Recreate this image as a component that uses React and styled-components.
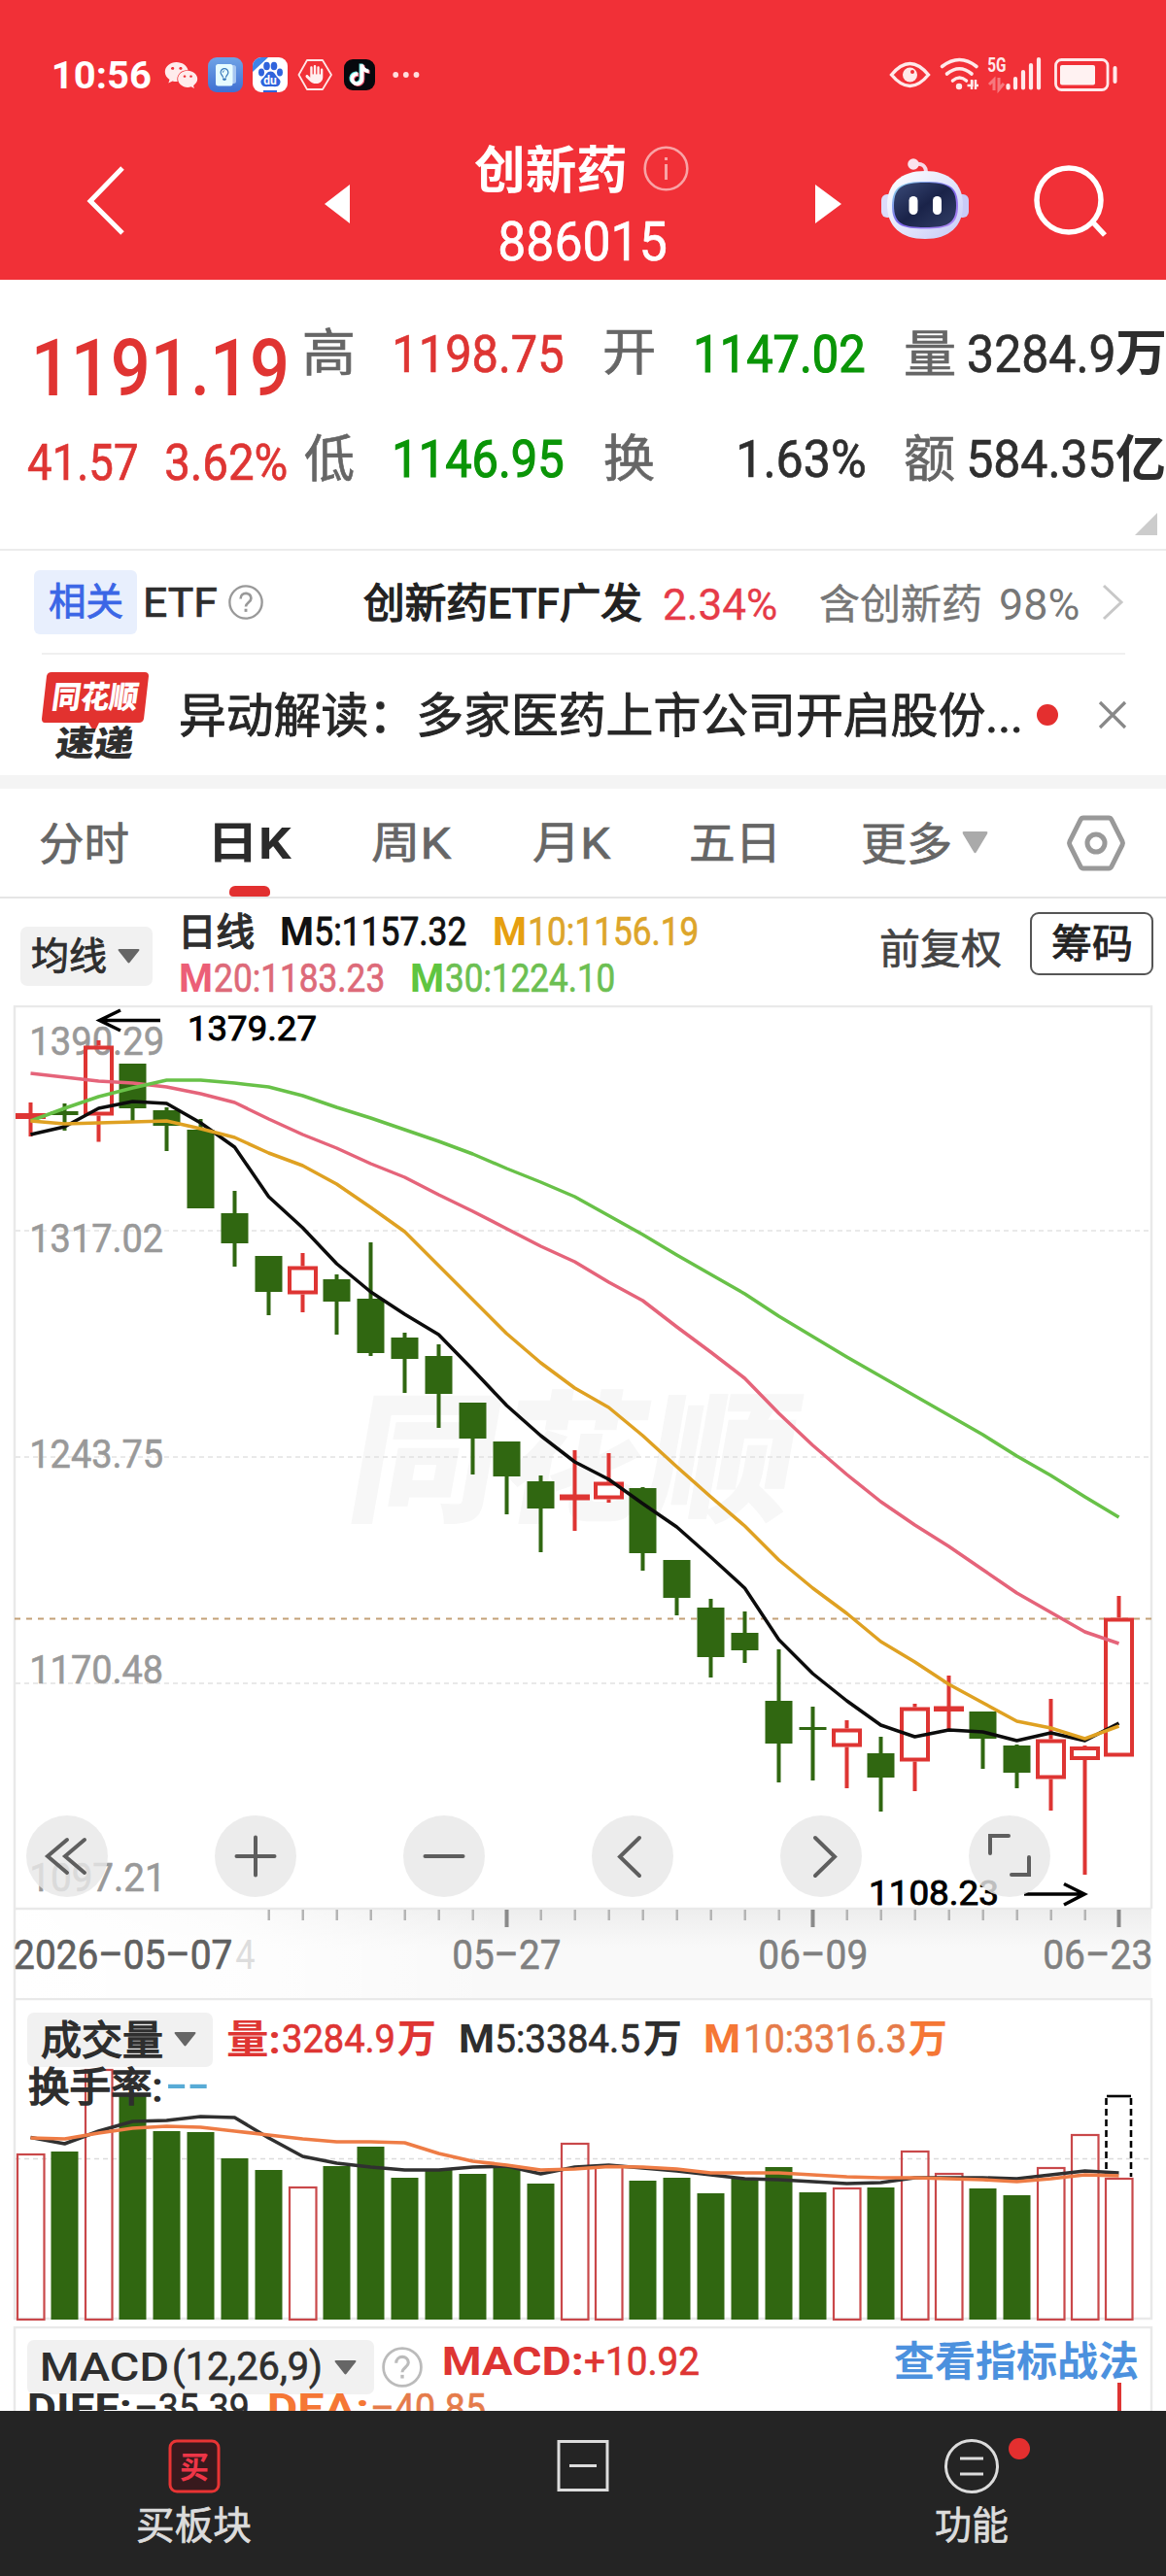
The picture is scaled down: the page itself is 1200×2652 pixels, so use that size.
import React from 'react';
import styled, { createGlobalStyle } from 'styled-components';
import { FaWeixin, FaTiktok, FaHand, FaRegLightbulb } from 'react-icons/fa6';

const FAMILY = 'Roboto, "Noto Sans CJK SC", sans-serif';
const RED = '#de3533';
const GREEN = '#306711';

const GlobalStyle = createGlobalStyle`
  * { box-sizing: border-box; }
  html, body { margin: 0; padding: 0; background: #fff; }
  body { font-family: ${FAMILY}; color: #2e2e2e; }
  svg { display: block; flex: none; overflow: visible; }
`;

/* ---------- text fitted to a given ink width ---------- */

const ctx = document.createElement('canvas').getContext('2d');

function measure(text, size, weight) {
  ctx.font = `${weight} ${size}px ${FAMILY}`;
  const m = ctx.measureText(text);
  return {
    left: m.actualBoundingBoxLeft,
    width: m.actualBoundingBoxLeft + m.actualBoundingBoxRight,
    middle: (m.actualBoundingBoxAscent - m.actualBoundingBoxDescent) / 2,
  };
}

const FitBox = styled.span`
  display: block;
  flex: none;
  height: ${(p) => p.$size}px;
  width: ${(p) => p.$w}px;
  margin-left: ${(p) => p.$ml}px;
  font-size: ${(p) => p.$size}px;
  line-height: ${(p) => p.$size}px;
  font-weight: ${(p) => p.$weight};
  color: ${(p) => p.$color || 'inherit'};
  -webkit-text-stroke: ${(p) => p.$stroke}px currentColor;
`;
const FitInk = styled.span`
  display: inline-block;
  white-space: nowrap;
  transform-origin: 0 50%;
`;

// `stroke` thickens the regular weight into a medium one
function Fit({ children, w, size, ml = 0, weight = 400, stroke = 0.7, color, dy = 0 }) {
  const m = measure(children, size, weight);
  const shift = dy - (0.342 * size - m.middle);
  return (
    <FitBox $w={w} $size={size} $ml={ml} $weight={weight} $stroke={weight === 400 ? stroke : 0} $color={color}>
      <FitInk style={{ transform: `translateY(${shift}px) scaleX(${w / m.width}) translateX(${m.left}px)` }}>
        {children}
      </FitInk>
    </FitBox>
  );
}

const ChartText = styled.text`
  font-family: ${FAMILY};
  font-size: ${(p) => p.$size}px;
  font-weight: ${(p) => p.$weight};
`;

function Label({ x, y, w, size = 41, weight = 400, fill, stroke = 0, children }) {
  const m = measure(children, size, weight);
  return (
    <g transform={`translate(${x} ${y}) scale(${w / m.width} 1)`}>
      <ChartText $size={size} $weight={weight} x={m.left} y="0" fill={fill} stroke={stroke ? fill : 'none'} strokeWidth={stroke}>{children}</ChartText>
    </g>
  );
}

/* ---------- layout ---------- */

const Page = styled.main`
  width: 1200px;
  height: 2652px;
  display: flex;
  flex-direction: column;
  overflow: hidden;
  background: #fff;
`;
const Header = styled.header`
  height: 288px;
  flex: none;
  background: #f13037;
  color: #fff;
  padding-top: 47px;
`;
const StatusBar = styled.div`
  height: 60px;
  display: flex;
  align-items: center;
  padding: 0 50px 0 56px;
`;
const StatusIcon = styled.span`
  display: flex;
  align-items: center;
  justify-content: center;
  width: ${(p) => p.$w}px;
  height: ${(p) => p.$h || p.$w}px;
  margin-left: ${(p) => p.$ml}px;
  border-radius: 9px;
  background: ${(p) => p.$bg || 'transparent'};
  overflow: hidden;
`;
const Spacer = styled.span`flex: 1;`;
const TitleBar = styled.div`
  height: 181px;
  display: flex;
  align-items: center;
  padding-left: 89px;
`;
const TitleBlock = styled.div`
  width: 479px;
  height: 181px;
  display: flex;
  flex-direction: column;
  padding: 41px 0 0 128px;
`;
const TitleLine = styled.div`
  display: flex;
  flex: none;
  align-items: center;
  height: 51px;
`;
const CodeLine = styled.div`
  display: flex;
  flex: none;
  align-items: center;
  height: 89px;
  padding: 10px 0 0 27px;
`;
const Quote = styled.section`
  height: 279px;
  flex: none;
  padding-top: 22px;
  border-bottom: 2px solid #ececec;
`;
const QuoteRow = styled.div`
  height: 108px;
  display: flex;
  align-items: center;
`;
const Corner = styled.div`
  display: flex;
  justify-content: flex-end;
  padding: 2px 9px 0 0;
`;
const Related = styled.section`
  height: 105px;
  flex: none;
  display: flex;
  align-items: center;
  padding-left: 35px;
`;
const Badge = styled.span`
  width: 106px;
  height: 66px;
  display: flex;
  align-items: center;
  justify-content: center;
  border-radius: 6px;
  background: #e8effd;
`;
const IconSlot = styled.span`
  margin-left: ${(p) => p.$ml}px;
  margin-top: ${(p) => p.$mt || 0}px;
`;
const News = styled.section`
  height: 126px;
  flex: none;
  display: flex;
  align-items: center;
  margin-left: 43px;
  width: 1115px;
  border-top: 2px solid #f0f0f0;
`;
const NewsLogo = styled.div`
  width: 110px;
  height: 92px;
`;
const Dot = styled.span`
  width: 22px;
  height: 22px;
  flex: none;
  border-radius: 50%;
  background: #e42f2f;
  margin-left: ${(p) => p.$ml}px;
`;
const Band = styled.div`
  height: 14px;
  flex: none;
  background: #f4f4f4;
`;
const Tabs = styled.nav`
  height: 113px;
  flex: none;
  display: flex;
  align-items: center;
  border-bottom: 2px solid #e5e5e5;
`;
const Tab = styled.div`
  height: 111px;
  display: flex;
  flex-direction: column;
  align-items: center;
  padding-top: 33px;
  margin-left: ${(p) => p.$ml}px;
  color: ${(p) => (p.$active ? '#2b2b2b' : '#666')};
`;
const TabMark = styled.span`
  width: 42px;
  height: 11px;
  margin-top: 22px;
  margin-left: -6px;
  border-radius: 6px 6px 4px 4px;
  background: #e23030;
`;
const Legend = styled.section`
  height: 110px;
  flex: none;
  display: flex;
  align-items: flex-start;
  padding-left: 21px;
`;
const Chip = styled.div`
  width: ${(p) => p.$w}px;
  height: ${(p) => p.$h}px;
  margin-top: ${(p) => p.$mt || 0}px;
  flex: none;
  display: flex;
  align-items: center;
  border-radius: 7px;
  background: #f1f1f1;
`;
const LegendLines = styled.div`
  width: 750px;
  padding: 10px 0 0 29px;
`;
const LegendLine = styled.div`
  height: 48px;
  display: flex;
  align-items: center;
`;
const Adjust = styled.div`
  height: 103px;
  display: flex;
  align-items: center;
`;
const ChipButton = styled.button`
  width: 127px;
  height: 65px;
  margin: 14px 0 0 30px;
  padding: 0 0 0 21px;
  display: flex;
  align-items: center;
  border: 2px solid #555;
  border-radius: 9px;
  background: #fff;
  font-family: inherit;
`;
const ChartPanel = styled.section`
  position: relative;
  height: ${(p) => p.$h}px;
  flex: none;
  overflow: hidden;
`;
const Overlay = styled.div`
  position: absolute;
  left: 0;
  top: 0;
  width: 1200px;
`;
const Controls = styled.div`
  position: absolute;
  left: 27px;
  top: 834px;
  display: flex;
  gap: 110px;
`;
const RoundButton = styled.button`
  width: 84px;
  height: 84px;
  padding: 0;
  border: 0;
  border-radius: 50%;
  background: rgba(232, 232, 232, 0.82);
`;
const PanelHead = styled.div`
  display: flex;
  align-items: center;
  height: ${(p) => p.$h}px;
  padding-left: 28px;
`;
const SubLine = styled.div`
  display: flex;
  align-items: center;
  height: 40px;
  padding-left: 30px;
`;
const NavBar = styled.footer`
  height: 170px;
  flex: none;
  display: grid;
  grid-template-columns: repeat(3, 400px);
  background: #242424;
  color: #dcdcdc;
`;
const NavItem = styled.div`
  display: flex;
  flex-direction: column;
  align-items: center;
  padding-top: 28px;
  position: relative;
`;
const NavText = styled.div`
  display: flex;
  margin-top: 12px;
`;
const NavDot = styled(Dot)`
  position: absolute;
  left: 238px;
  top: 28px;
`;

/* ---------- icons ---------- */

const Caret = ({ color = '#666', w = 23, h = 15 }) => (
  <svg width={w} height={h} viewBox="0 0 23 15" preserveAspectRatio="none"><path d="M1.5 0h20q1.500 0 .8 1.500L12.600 13.800q-1.100 1.400-2.200 0L.7 1.500Q0 0 1.500 0z" fill={color} /></svg>
);
const Help = ({ size, color }) => (
  <svg width={size} height={size} viewBox="0 0 40 40" fill="none" stroke={color} strokeWidth="2.600">
    <circle cx="20" cy="20" r="18.500" />
    <path d="M14 16c0-8 12-8 12-.5 0 4.500-6 5-6 9.500" strokeWidth="3" /><path d="M20 27.500v3.500" strokeWidth="3.200" />
  </svg>
);
const BaiduIcon = () => (
  <svg width="36" height="36" viewBox="0 0 36 36">
    <rect width="36" height="36" fill="#fff" />
    <path d="M0 0h16L0 15z" fill="#3f83e8" />
    <g fill="#2f63dc">
      <ellipse cx="14.500" cy="9" rx="3.300" ry="4.300" /><ellipse cx="22" cy="9" rx="3.300" ry="4.300" />
      <ellipse cx="9" cy="15.500" rx="3" ry="4" /><ellipse cx="28" cy="15.500" rx="3" ry="4" />
      <path d="M18.500 14.500c4 0 4.500 3.500 7 6s4 3.500 2.500 7-5 2.500-9.500 2.500-8 1-9.500-2.500 0-4.500 2.500-7 3-6 7-6z" />
      <path d="M11 34h14v2H11z" />
    </g>
    <text x="18" y="27.500" textAnchor="middle" fill="#fff" fontFamily="Roboto" fontWeight="700" fontSize="12">du</text>
  </svg>
);
const RobotIcon = () => (
  <svg width="90" height="84" viewBox="0 0 90 84">
    <defs>
      <linearGradient id="shell" x1="0" y1="0" x2="1" y2="1"><stop offset="0" stopColor="#ffffff" /><stop offset=".6" stopColor="#dfe2fb" /><stop offset="1" stopColor="#c4c8f6" /></linearGradient>
      <linearGradient id="rim" x1="0" y1="0" x2="1" y2="1"><stop offset="0" stopColor="#8fe4ee" /><stop offset=".5" stopColor="#7a63e8" /><stop offset="1" stopColor="#b58cf5" /></linearGradient>
      <linearGradient id="face" x1="0" y1="0" x2="1" y2="1"><stop offset="0" stopColor="#3a4a78" /><stop offset=".5" stopColor="#1a2349" /><stop offset="1" stopColor="#323f66" /></linearGradient>
    </defs>
    <path d="M34 6q12-2 12 9" fill="none" stroke="#f7d8e6" strokeWidth="4" />
    <circle cx="33" cy="6" r="5.800" fill="#fbe3ee" />
    <rect x="0" y="37" width="13" height="24" rx="6" fill="#dcdcfa" /><rect x="77" y="37" width="13" height="24" rx="6" fill="#c9cbf7" />
    <path d="M45 13c25 0 39 13 39 35S70 83 45 83 6 70 6 48s14-35 39-35z" fill="url(#shell)" />
    <path d="M45 24c24 0 34 5 34 25S69 72.500 45 72.500 11 69 11 49s10-25 34-25z" fill="url(#rim)" />
    <path d="M45 25c22 0 32 4 32 23.500S67 71 45 71 13 68 13 48.500s10-23.500 32-23.500z" fill="url(#face)" />
    <rect x="28.500" y="39" width="9" height="19" rx="4.500" fill="#fff" /><rect x="53" y="39" width="9" height="19" rx="4.500" fill="#fff" />
  </svg>
);
const StatusRight = () => (
  <svg width="236" height="40" viewBox="914 57 236 40" fill="none" stroke="#ffe9ea">
    <path d="M917.500 77Q927 65.500 936.500 65.500T955.500 77Q946 88.500 936.500 88.500T917.500 77z" strokeWidth="3.400" />
    <circle cx="936.500" cy="77" r="7.500" fill="#ffe9ea" stroke="none" /><circle cx="939" cy="74" r="2" fill="#f13037" stroke="none" />
    <g strokeWidth="3.600" strokeLinecap="round">
      <path d="M969.500 68.500q18-14 35.500 0" /><path d="M974.500 76q13-10.500 25.500 0" /><path d="M980.500 83q7-6 14 0" />
    </g>
    <circle cx="987" cy="89" r="3.200" fill="#ffe9ea" stroke="none" />
    <path d="M995.500 88h5V82.500M1000 82v10M1004 82v10v-4h3" strokeWidth="2.400" />
    <g opacity=".4"><path d="M1018 87l5-5v11M1028 80v12l5-6" strokeWidth="3" /></g>
    <g strokeWidth="4.200" strokeLinecap="round">
      <path d="M1037.500 88v2.500M1045 81v9.500M1053 74v16.500M1061 67v23.500M1069 61v29.500" />
    </g>
    <rect x="1086.500" y="61.500" width="53.500" height="31" rx="6" strokeWidth="2.800" />
    <rect x="1091" y="67" width="36" height="20.500" rx="2" fill="#fff2f2" stroke="none" />
    <path d="M1147.500 70v14" strokeWidth="4" strokeLinecap="round" />
    <Label x={1017} y={74} w={18} size={20} weight={700} fill="#ffe9ea">5G</Label>
  </svg>
);

/* ---------- data ---------- */

// kind, high, body top, body bottom, low
const CANDLES = [
  ['r', 1135, 1146, 1152, 1170], ['g', 1136, 1144, 1148, 1164], ['r', 1071, 1076.5, 1148.5, 1175.5],
  ['g', 1095, 1095, 1141, 1155], ['g', 1140, 1143, 1159, 1185], ['g', 1152, 1163, 1244, 1244],
  ['g', 1226, 1249, 1280, 1304], ['g', 1293, 1293, 1330, 1354], ['r', 1290, 1303.5, 1332.5, 1351],
  ['g', 1312, 1317, 1340, 1374], ['g', 1279, 1337, 1393, 1396], ['g', 1372, 1377, 1399, 1434],
  ['g', 1384, 1396, 1435, 1470], ['g', 1444, 1444, 1481, 1518], ['g', 1484, 1484, 1520, 1559],
  ['g', 1519, 1525, 1553, 1598], ['r', 1493, 1538.5, 1544.5, 1576], ['r', 1496, 1525.5, 1543.5, 1547],
  ['g', 1531, 1532, 1599, 1617], ['g', 1606, 1606, 1645, 1663], ['g', 1646, 1655, 1706, 1727],
  ['g', 1659, 1681, 1699, 1712], ['g', 1698, 1751, 1795, 1835], ['g', 1757, 1778, 1781, 1833],
  ['r', 1771, 1779.5, 1798.5, 1841], ['g', 1788, 1805, 1830, 1865], ['r', 1754, 1757.5, 1813.5, 1844],
  ['r', 1725, 1756.5, 1762, 1782], ['g', 1762, 1762, 1790, 1821], ['g', 1796, 1797, 1825, 1841],
  ['r', 1749, 1790.5, 1831.5, 1864], ['r', 1797, 1798, 1812, 1930], ['r', 1643, 1665.5, 1808.5, 1808],
];
const AVERAGES = [
  ['#e5647a', [1105, 1109, 1113, 1115, 1119, 1126, 1135, 1152, 1168, 1182, 1198, 1212, 1230, 1247, 1265, 1283, 1299, 1320, 1339, 1366, 1392, 1419, 1455, 1488, 1518, 1546, 1570, 1592, 1616, 1640, 1660, 1680, 1692]],
  ['#68c148', [1154, 1141, 1129, 1120, 1112, 1112, 1115, 1119, 1128, 1140, 1151, 1163, 1175, 1188, 1203, 1217, 1232, 1251.5, 1271, 1292, 1312, 1332, 1355, 1376, 1397, 1417, 1437, 1457, 1477, 1499, 1519, 1541, 1562]],
  ['#0c0c0c', [1168, 1160, 1141, 1134, 1136, 1156, 1181, 1232, 1264, 1301, 1330, 1353, 1374, 1410, 1447, 1478, 1505, 1523, 1548, 1572, 1603, 1635, 1688, 1723, 1751, 1776, 1788, 1781, 1783, 1792, 1784, 1792, 1774]],
  ['#dfa122', [1154, 1157, 1156, 1155, 1154, 1162, 1171, 1187, 1200, 1219, 1243, 1268, 1303, 1338, 1373, 1403, 1429, 1449, 1478, 1510, 1541, 1571, 1606, 1635, 1661, 1690, 1711, 1734, 1753, 1772, 1779, 1790, 1777]],
];
const VOLUMES = [2217, 2215, 2130, 2156, 2194, 2195, 2222, 2234, 2251, 2230, 2210, 2242, 2233, 2238, 2231, 2248, 2206, 2229, 2245, 2242, 2258, 2242, 2231, 2257, 2252, 2252, 2214, 2237, 2253, 2260, 2231, 2197, 2242];
const VOLUME_LINES = [
  ['#303030', [2200.5, 2207, 2194, 2184, 2183, 2179, 2180, 2201, 2220, 2227, 2231, 2234, 2234, 2231, 2230, 2238, 2231, 2229, 2232, 2235, 2239, 2243, 2244, 2246, 2248, 2247, 2242, 2242, 2242, 2243, 2239, 2235, 2237]],
  ['#ee7c45', [2201, 2202, 2196, 2191, 2189, 2190, 2194, 2198, 2202, 2205, 2205, 2206, 2217, 2225, 2229, 2234, 2233, 2230.5, 2231, 2233, 2237, 2237, 2237, 2239, 2241, 2242, 2242, 2243, 2244, 2246, 2243, 2239, 2240]],
];
const PRICES = [['1390.29', 1086], ['1317.02', 1289], ['1243.75', 1511], ['1170.48', 1733], ['1097.21', 1947]];
const xOf = (i) => 31.5 + 35 * i;
const pointsOf = (ys) => ys.map((y, i) => `${xOf(i)},${y}`).join(' ');

function Candle({ i, d: [kind, high, top, bottom, low] }) {
  const x = xOf(i);
  if (kind === 'g') {
    return (
      <g fill={GREEN}>
        <rect x={x - 2} y={high} width="4" height={low - high} />
        <rect x={x - 14} y={top} width="28" height={bottom - top} />
      </g>
    );
  }
  const flat = bottom - top < 8;
  return (
    <g fill={RED}>
      <rect x={x - 2} y={high} width="4" height={flat ? low - high : Math.max(0, top - high)} />
      {!flat && low > bottom && <rect x={x - 2} y={bottom} width="4" height={low - bottom} />}
      {flat
        ? <rect x={x - 15.5} y={top} width="31" height={bottom - top} />
        : <rect x={x - 13.5} y={top + 2} width="27" height={bottom - top - 4} fill="none" stroke={RED} strokeWidth="4" />}
    </g>
  );
}

function PriceChart() {
  return (
    <svg width="1200" height="1022" viewBox="0 1035 1200 1022" fill="none">
      <defs>
        <linearGradient id="axisTop" x1="0" x2="0" y1="0" y2="1"><stop offset="0" stopColor="#ededed" /><stop offset="1" stopColor="#ededed" stopOpacity="0" /></linearGradient>
        <linearGradient id="axisFade" x1="0" x2="1" y1="0" y2="0"><stop offset="0" stopColor="#fff" /><stop offset=".45" stopColor="#fff" stopOpacity=".8" /><stop offset="1" stopColor="#fff" stopOpacity="0" /></linearGradient>
      </defs>
      <rect x="15" y="1965" width="1170" height="92" fill="#f9f9f9" />
      <rect x="15" y="1965" width="1170" height="40" fill="url(#axisTop)" />
      <rect x="15" y="1965" width="500" height="92" fill="url(#axisFade)" />
      <g transform="translate(363 1555) skewX(-10)">
        <Label x={0} y={0} w={444} size={146} weight={900} fill="#f7f7f7">同花顺</Label>
      </g>
      <path d="M15 2057V1036H1185V1965M15 1965H1185" stroke="#e9e9e9" strokeWidth="2.500" />
      <g stroke="#e2e2e2" strokeWidth="1.500" strokeDasharray="5 4"><path d="M16 1267H1185M16 1500H1185M16 1733H1185" /></g>
      <path d="M15 1666.500H1185" stroke="#c3a077" strokeWidth="2" strokeDasharray="6 6" />
      {PRICES.map(([t, y]) => <Label key={t} x={33} y={y} w={t === '1097.21' ? 130 : 134} stroke={0.6} size={41.5} fill="#999">{t}</Label>)}
      {CANDLES.map((d, i) => <Candle key={i} i={i} d={d} />)}
      {AVERAGES.map(([c, ys]) => <polyline key={c} points={pointsOf(ys)} stroke={c} strokeWidth="3.500" strokeLinejoin="round" />)}
      <Label x={195} y={1071} w={130} size={35.5} stroke={0.9} fill="#000">1379.27</Label>
      <Label x={896} y={1961} w={130} size={35.5} stroke={0.9} fill="#000">1108.23</Label>
      <path d="M165 1050.500H103M124 1040L102.500 1050.500L124 1061" stroke="#000" strokeWidth="3.600" />
      <path d="M1054 1950H1115M1095 1939.500L1116 1950L1095 1961" stroke="#000" strokeWidth="3.600" />
      {CANDLES.map((_, i) => i > 6 && (
        (i - 14) % 9 === 0
          ? <rect key={i} x={xOf(i) - 2} y="1966" width="4" height="18" fill="#8a8a8a" />
          : <rect key={i} x={xOf(i) - 1} y="1966" width="2.500" height="11" fill="#b5b5b5" />
      ))}
      <Label x={243} y={2027} w={19} size={42} fill="#ddd">4</Label>
      <Label x={15} y={2027} w={223} size={42} stroke={0.7} fill="#606060">2026–05–07</Label>
      <Label x={467} y={2027} w={109} size={42} stroke={0.5} fill="#808080">05–27</Label>
      <Label x={782} y={2027} w={109} size={42} stroke={0.5} fill="#808080">06–09</Label>
      <Label x={1075} y={2027} w={109} size={42} stroke={0.5} fill="#808080">06–23</Label>
    </svg>
  );
}

function VolumeChart() {
  return (
    <svg width="1200" height="338" viewBox="0 2057 1200 338" fill="none">
      <path d="M15 2387V2058H1185V2387z" stroke="#e9e9e9" strokeWidth="2.500" />
      <path d="M16 2222.500H1185" stroke="#dcdcdc" strokeWidth="1.500" strokeDasharray="5 4" />
      {VOLUMES.map((y, i) => {
        const hollow = CANDLES[i][0] === 'r';
        return hollow
          ? <rect key={i} x={xOf(i) - 13.5} y={y + 1} width="27.500" height={2387 - y} stroke="#c9484a" strokeWidth="2.200" />
          : <rect key={i} x={xOf(i) - 14} y={y} width="28" height={2388 - y} fill={GREEN} />;
      })}
      <path d="M1139 2158H1164" stroke="#000" strokeWidth="2.600" />
      <path d="M1138.500 2160V2241M1164 2160V2241" stroke="#000" strokeWidth="2.600" strokeDasharray="7 4" />
      {VOLUME_LINES.map(([c, ys]) => <polyline key={c} points={pointsOf(ys)} stroke={c} strokeWidth="3.600" strokeLinejoin="round" />)}
    </svg>
  );
}

const CONTROL_PATHS = [
  'M42 25L22 42L42 59M60 25L40 42L60 59',
  'M42 22.500V61.500M22.500 42H61.500',
  'M22.500 42H61.500',
  'M49 23L29 42.500L49 62',
  'M36 23L56 42.500L36 62',
  'M22 39V21H41M62 43V61H44',
];

export default function App() {
  return (
    <Page lang="zh-CN">
      <GlobalStyle />
      <Header>
        <StatusBar>
          <Fit w={99} size={38} weight={700}>10:56</Fit>
          <StatusIcon $w={35} $ml={14}><FaWeixin size={35} color="#ffecec" /></StatusIcon>
          <StatusIcon $w={36} $ml={10} $bg="linear-gradient(#6fa3e6, #3f6fd2)">
            <svg width="36" height="36" viewBox="0 0 36 36"><rect x="13" y="8" width="16" height="19" rx="2.500" fill="#a7c6f1" /><rect x="8" y="7" width="17.500" height="22.500" rx="2.500" fill="#e6fbff" /><FaRegLightbulb x="10.500" y="11" size={13} color="#3878bb" /></svg>
          </StatusIcon>
          <StatusIcon $w={36} $ml={10}><BaiduIcon /></StatusIcon>
          <StatusIcon $w={36} $ml={10}>
            <svg width="36" height="36" viewBox="0 0 36 36"><path d="M10 3h16l9 15-9 15H10L1.500 18z" fill="none" stroke="#ffe6e7" strokeWidth="1.800" strokeLinejoin="round" /><FaHand x="8.500" y="8" size={19} color="#ffeff0" /></svg>
          </StatusIcon>
          <StatusIcon $w={32} $ml={12} $bg="#07080d">
            <svg width="32" height="32" viewBox="0 0 32 32"><FaTiktok x="4" y="4.500" size={22} color="#5fe6e4" /><FaTiktok x="6" y="6" size={22} color="#f0566f" /><FaTiktok x="5" y="5.200" size={22} color="#fff" /></svg>
          </StatusIcon>
          <StatusIcon $w={28} $ml={18}>
            <svg width="28" height="8" viewBox="0 0 28 8" fill="#ffdede"><circle cx="3.200" cy="4" r="2.900" /><circle cx="13.800" cy="4" r="2.900" /><circle cx="24.500" cy="4" r="2.900" /></svg>
          </StatusIcon>
          <Spacer />
          <StatusRight />
        </StatusBar>
        <TitleBar>
          <IconSlot $ml={0} $mt={17}><svg width="40" height="72" viewBox="0 0 40 72"><path d="M37 3L4 37L37 70" fill="none" stroke="#fff" strokeWidth="5" /></svg></IconSlot>
          <IconSlot $ml={205} $mt={24}><svg width="26" height="40" viewBox="0 0 26 40"><path d="M26 0V40L0 20z" fill="#fff" /></svg></IconSlot>
          <TitleBlock>
            <TitleLine>
              <Fit w={156} size={52} weight={700}>创新药</Fit>
              <IconSlot $ml={18}>
                <svg width="47" height="47" viewBox="0 0 47 47" fill="none" stroke="#f9a3a5" strokeWidth="2.600"><circle cx="23.500" cy="23.500" r="21.800" /><path d="M23.500 19V35M23.500 12V15" strokeWidth="3" /></svg>
              </IconSlot>
            </TitleLine>
            <CodeLine><Fit w={170} size={55}>886015</Fit></CodeLine>
          </TitleBlock>
          <IconSlot $ml={0} $mt={24}><svg width="27" height="40" viewBox="0 0 27 40"><path d="M0 0V40L27 20z" fill="#fff" /></svg></IconSlot>
          <IconSlot $ml={41} $mt={14}><RobotIcon /></IconSlot>
          <IconSlot $ml={67} $mt={21}>
            <svg width="76" height="76" viewBox="0 0 76 76" fill="none" stroke="#fff" strokeWidth="5.500"><circle cx="36" cy="36" r="33" /><path d="M60 58L73 72" /></svg>
          </IconSlot>
        </TitleBar>
      </Header>

      <Quote>
        <QuoteRow>
          <Fit ml={37} w={257} size={82} weight={500} color="#e03432" dy={14}>1191.19</Fit>
          <Fit ml={20} w={49} size={52} color="#666" dy={-1}>高</Fit>
          <Fit ml={44} w={172} size={53} color={RED}>1198.75</Fit>
          <Fit ml={43} w={51} size={52} color="#666">开</Fit>
          <Fit ml={44} w={172} size={53} color="#0a9507" stroke={1.2}>1147.02</Fit>
          <Fit ml={43} w={50} size={52} color="#666">量</Fit>
          <Fit ml={15} w={149} size={53}>3284.9</Fit>
          <Fit ml={2} w={50} size={52} weight={700}>万</Fit>
        </QuoteRow>
        <QuoteRow>
          <Fit ml={29} w={112} size={51} color={RED} dy={3}>41.57</Fit>
          <Fit ml={30} w={124} size={51} color={RED} dy={3}>3.62%</Fit>
          <Fit ml={19} w={50} size={52} color="#666">低</Fit>
          <Fit ml={43} w={172} size={53} color="#0a9507" stroke={1.2}>1146.95</Fit>
          <Fit ml={43} w={51} size={52} color="#666">换</Fit>
          <Fit ml={88} w={129} size={53}>1.63%</Fit>
          <Fit ml={42} w={50} size={52} color="#666">额</Fit>
          <Fit ml={15} w={149} size={53}>584.35</Fit>
          <Fit ml={2} w={50} size={52} weight={700}>亿</Fit>
        </QuoteRow>
        <Corner><svg width="23" height="23" viewBox="0 0 23 23"><path d="M23 0V23H0z" fill="#ccc" /></svg></Corner>
      </Quote>

      <Related>
        <Badge><Fit w={75} size={39} color="#3b66e6" stroke={0.9}>相关</Fit></Badge>
        <Fit ml={9} w={73} size={43} dy={1}>ETF</Fit>
        <IconSlot $ml={12}><Help size={36} color="#999" /></IconSlot>
        <Fit ml={104} w={285} size={42} stroke={1.4} dy={1} color="#222">创新药ETF广发</Fit>
        <Fit ml={24} w={115} size={44} stroke={0.3} dy={2} color="#e63b48">2.34%</Fit>
        <Fit ml={45} w={165} size={42} stroke={0.4} dy={1} color="#777">含创新药</Fit>
        <Fit ml={21} w={80} size={44} stroke={0} dy={2} color="#777">98%</Fit>
        <IconSlot $ml={24}><svg width="23" height="38" viewBox="0 0 23 38"><path d="M2 2L20 19L2 36" fill="none" stroke="#c8c8c8" strokeWidth="3" /></svg></IconSlot>
      </Related>

      <News>
        <NewsLogo>
          <svg width="110" height="92" viewBox="43 688 110 92">
            <path d="M53 690H149Q153 690 153 694L148 738Q147 742 143 742H102L97 752L91 742H46Q43 742 43 738L48 694Q49 690 53 690z" fill="#e2322f" />
            <g transform="translate(0 727) skewX(-8)"><Label x={54} y={0} w={86} size={32} weight={900} fill="#fff">同花顺</Label></g>
            <g transform="translate(0 776) skewX(-8)"><Label x={56} y={0} w={80} size={36} weight={900} fill="#2f2f2f">速递</Label></g>
          </svg>
        </NewsLogo>
        <Fit ml={33} w={863} size={49} stroke={0.9} dy={-1} color="#262626">异动解读：多家医药上市公司开启股份...</Fit>
        <Dot $ml={18} />
        <IconSlot $ml={41}><svg width="30" height="30" viewBox="0 0 30 30"><path d="M2 2L28 28M28 2L2 28" stroke="#888" strokeWidth="3.200" /></svg></IconSlot>
      </News>
      <Band />

      <Tabs>
        <Tab $ml={42}><Fit w={90} size={46}>分时</Fit></Tab>
        <Tab $ml={88} $active><Fit w={80} size={45} weight={700}>日K</Fit><TabMark /></Tab>
        <Tab $ml={83}><Fit w={82} size={45}>周K</Fit></Tab>
        <Tab $ml={84}><Fit w={80} size={45}>月K</Fit></Tab>
        <Tab $ml={82}><Fit w={86} size={46}>五日</Fit></Tab>
        <Tab $ml={91}><Fit w={90} size={46}>更多</Fit></Tab>
        <IconSlot $ml={12}><Caret color="#aaa" w={27} h={23} /></IconSlot>
        <IconSlot $ml={80}>
          <svg width="62" height="58" viewBox="0 0 62 58" fill="none" stroke="#999" strokeWidth="5"><path d="M18 3H44Q46 3 47 5L58 27Q59 29 58 31L47 53Q46 55 44 55H18Q16 55 15 53L4 31Q3 29 4 27L15 5Q16 3 18 3z" /><circle cx="31" cy="29" r="9" /></svg>
        </IconSlot>
      </Tabs>

      <Legend>
        <Chip $w={136} $h={61} $mt={29}>
          <Fit ml={12} w={76} size={39} stroke={0.9}>均线</Fit>
          <IconSlot $ml={12}><Caret /></IconSlot>
        </Chip>
        <LegendLines>
          <LegendLine>
            <Fit ml={3} w={72} size={39} stroke={1.5}>日线</Fit>
            <Fit ml={29} w={31} size={40} weight={700} color="#111">M</Fit>
            <Fit ml={5} w={153} size={40} stroke={0.9} color="#111">5:1157.32</Fit>
            <Fit ml={30} w={31} size={40} weight={700} color="#e69f10">M</Fit>
            <Fit ml={6} w={171} size={40} color="#dda52a">10:1156.19</Fit>
          </LegendLine>
          <LegendLine>
            <Fit w={31} size={40} weight={700} color="#ec5f77">M</Fit>
            <Fit ml={4} w={173} size={40} color="#dd6a79">20:1183.23</Fit>
            <Fit ml={30} w={31} size={40} weight={700} color="#5fc540">M</Fit>
            <Fit ml={4} w={173} size={40} color="#6cbf52">30:1224.10</Fit>
          </LegendLine>
        </LegendLines>
        <Adjust><Fit w={123} size={42} color="#444">前复权</Fit></Adjust>
        <ChipButton><Fit w={81} size={41} stroke={0.9} color="#222">筹码</Fit></ChipButton>
      </Legend>

      <ChartPanel $h={1022}>
        <PriceChart />
        <Controls>
          {CONTROL_PATHS.map((d) => (
            <RoundButton key={d}>
              <svg width="84" height="84" viewBox="0 0 84 84"><path d={d} fill="none" stroke="#5e5e5e" strokeWidth="4" strokeLinecap="round" /></svg>
            </RoundButton>
          ))}
        </Controls>
      </ChartPanel>

      <ChartPanel $h={338}>
        <VolumeChart />
        <Overlay>
          <PanelHead $h={85}>
            <Chip $w={191} $h={56}>
              <Fit ml={15} w={124} size={41} stroke={1.5}>成交量</Fit>
              <IconSlot $ml={12}><Caret /></IconSlot>
            </Chip>
            <Fit ml={15} w={52} size={41} weight={700} color={RED}>量:</Fit>
            <Fit ml={5} w={114} size={41} color={RED}>3284.9</Fit>
            <Fit ml={4} w={38} size={41} weight={700} color={RED}>万</Fit>
            <Fit ml={27} w={33} size={41} weight={700}>M</Fit>
            <Fit ml={5} w={146} size={41}>5:3384.5</Fit>
            <Fit ml={4} w={38} size={41} weight={700}>万</Fit>
            <Fit ml={26} w={34} size={41} weight={700} color="#f57735">M</Fit>
            <Fit ml={8} w={163} size={41} color="#e57b4a">10:3316.3</Fit>
            <Fit ml={4} w={38} size={41} weight={700} color="#f57735">万</Fit>
          </PanelHead>
          <SubLine>
            <Fit w={135} size={41} stroke={1.7} dy={-14}>换手率:</Fit>
            <Fit ml={7} w={42} size={44} weight={500} color="#58abd6" dy={-14}>--</Fit>
          </SubLine>
        </Overlay>
      </ChartPanel>

      <ChartPanel $h={87}>
        <svg width="1200" height="87" viewBox="0 2395 1200 87" fill="none">
          <path d="M15 2482V2396H1185V2482" stroke="#e9e9e9" strokeWidth="2.500" />
          <path d="M1152 2453V2482" stroke={RED} strokeWidth="4" />
        </svg>
        <Overlay>
          <PanelHead $h={84}>
            <Chip $w={357} $h={56}>
              <Fit ml={15} w={129} size={41} weight={500}>MACD</Fit>
              <Fit ml={7} w={151} size={40} dy={2}>(12,26,9)</Fit>
              <IconSlot $ml={14}><Caret /></IconSlot>
            </Chip>
            <IconSlot $ml={8}><Help size={42} color="#bbb" /></IconSlot>
            <Fit ml={22} w={141} size={41} weight={700} color={RED} dy={-6}>MACD:</Fit>
            <Fit ml={4} w={117} size={41} color={RED} dy={-6}>+10.92</Fit>
            <Fit ml={202} w={250} size={42} weight={700} color="#4c91de" dy={-7}>查看指标战法</Fit>
          </PanelHead>
          <SubLine>
            <Fit w={103} size={41} weight={700} dy={-20}>DIFF:</Fit>
            <Fit ml={8} w={114} size={41} dy={-20}>–35.39</Fit>
            <Fit ml={22} w={100} size={41} weight={700} color="#f57735" dy={-20}>DEA:</Fit>
            <Fit ml={7} w={115} size={41} color="#e57b4a" dy={-20}>–40.85</Fit>
          </SubLine>
        </Overlay>
      </ChartPanel>

      <NavBar>
        <NavItem>
          <svg width="56" height="58" viewBox="0 0 56 58"><rect x="3" y="3" width="50" height="52" rx="7" fill="#38191d" stroke="#e93434" strokeWidth="3" /><Label x={14} y={41} w={28} size={31} weight={700} fill="#ee3547">买</Label></svg>
          <NavText><Fit w={116} size={40}>买板块</Fit></NavText>
        </NavItem>
        <NavItem>
          <svg width="56" height="58" viewBox="0 0 56 58" fill="none" stroke="#dcdcdc" strokeWidth="3"><rect x="3" y="3.500" width="50" height="50" /><path d="M14 28.500H42" /></svg>
        </NavItem>
        <NavItem>
          <svg width="58" height="58" viewBox="0 0 58 58" fill="none" stroke="#dcdcdc" strokeWidth="3"><circle cx="29" cy="29" r="26.500" /><path d="M17 21H41M17 37H41" /></svg>
          <NavDot $ml={0} />
          <NavText><Fit w={74} size={40}>功能</Fit></NavText>
        </NavItem>
      </NavBar>
    </Page>
  );
}
